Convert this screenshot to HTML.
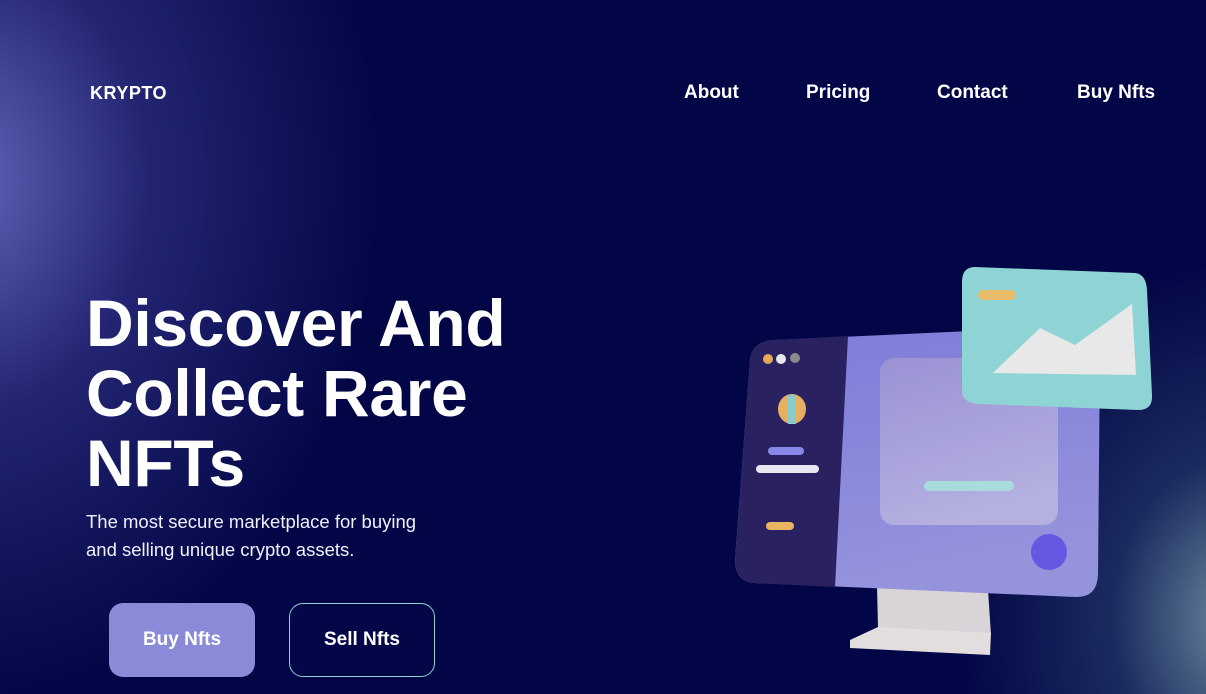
<!DOCTYPE html>
<html><head><meta charset="utf-8"><style>
*{margin:0;padding:0;box-sizing:border-box}
body{width:1206px;height:694px;overflow:hidden;background:#030646;font-family:"Liberation Sans",sans-serif;color:#fff;position:relative}
.bg{position:absolute;inset:0;background:
radial-gradient(ellipse 420px 520px at -40px 180px,rgba(98,102,185,1),rgba(60,62,150,.55) 45%,rgba(3,7,71,0) 100%),
radial-gradient(ellipse 280px 360px at 1240px 620px,rgba(110,140,160,1),rgba(50,80,120,.5) 45%,rgba(3,7,71,0) 100%);}
.logo{position:absolute;left:90px;top:83px;font-weight:bold;font-size:18px;letter-spacing:.5px}
.nav a{position:absolute;top:82px;font-weight:bold;font-size:19px;color:#fff;text-decoration:none}
h1{position:absolute;left:86px;top:288px;font-size:66px;line-height:70px;font-weight:bold;letter-spacing:-.3px}
p{position:absolute;left:86px;top:508px;font-size:18.5px;line-height:28px;color:#f0f0ff}
.btn{position:absolute;top:603px;width:146px;height:74px;border-radius:14px;font-weight:bold;font-size:19px;display:flex;align-items:center;justify-content:center}
.b1{left:109px;background:#8a8ad8}
.b2{left:289px;border:1.5px solid #8fd0d0;background:#030747}
</style></head><body>
<div class="bg"></div>
<div class="logo">KRYPTO</div>
<div class="nav"><a style="left:684px">About</a><a style="left:806px">Pricing</a><a style="left:937px">Contact</a><a style="left:1077px">Buy Nfts</a></div>
<h1>Discover And<br>Collect Rare<br>NFTs</h1>
<p>The most secure marketplace for buying<br>and selling unique crypto assets.</p>
<div class="btn b1">Buy Nfts</div>
<div class="btn b2">Sell Nfts</div>
<svg style="position:absolute;left:0;top:0" width="1206" height="694">
<defs>
<linearGradient id="sc" x1="0" y1="0" x2="0.3" y2="1"><stop offset="0" stop-color="#7c7ad8"/><stop offset="1" stop-color="#9593dc"/></linearGradient>
<linearGradient id="in" x1="0" y1="0" x2="0.3" y2="1"><stop offset="0" stop-color="#9a92d4"/><stop offset="1" stop-color="#b4b0e0"/></linearGradient>
</defs>
<polygon points="877,585 988,590 991,635 878,628" fill="#d9d4d8"/>
<polygon points="878,627 991,633 990,655 850,648 850,640" fill="#e2dede"/>
<path d="M775,340 L1080,326 Q1100,326 1100,350 L1098,575 Q1097,598 1075,597 L755,583 Q735,582 735,560 L750,360 Q752,341 775,340Z" fill="url(#sc)"/>
<path d="M775,340 L848,336 L835,587 L755,583 Q735,582 735,560 L750,360 Q752,341 775,340Z" fill="#2a2260"/>
<rect x="880" y="358" width="178" height="167" rx="14" fill="url(#in)"/>
<circle cx="768" cy="359" r="5" fill="#e6a95a"/><circle cx="781" cy="359" r="5" fill="#e6e6ee"/><circle cx="795" cy="358" r="5" fill="#8a8a8a"/>
<ellipse cx="792" cy="409" rx="14" ry="15" fill="#e6b060"/><rect x="788" y="395" width="8" height="29" fill="#8acccc"/>
<rect x="768" y="447" width="36" height="8" rx="4" fill="#8787e8"/>
<rect x="756" y="465" width="63" height="8" rx="4" fill="#e8e6ee"/>
<rect x="766" y="522" width="28" height="8" rx="4" fill="#e8b660"/>
<rect x="924" y="481" width="90" height="10" rx="5" fill="#a8dcdc"/>
<circle cx="1049" cy="552" r="18" fill="#6658e0"/>
<path d="M975,267 L1135,273 Q1146,274 1147,290 L1152,395 Q1153,410 1138,410 L978,404 Q962,403 962,390 L962,282 Q962,267 975,267Z" fill="#8ed4d4"/>
<polygon points="993,373 1040,328 1075,345 1132,304 1136,375" fill="#e8e8e8"/>
<rect x="978" y="290" width="38" height="10" rx="5" fill="#e8bc6a"/>
</svg>
</body></html>
